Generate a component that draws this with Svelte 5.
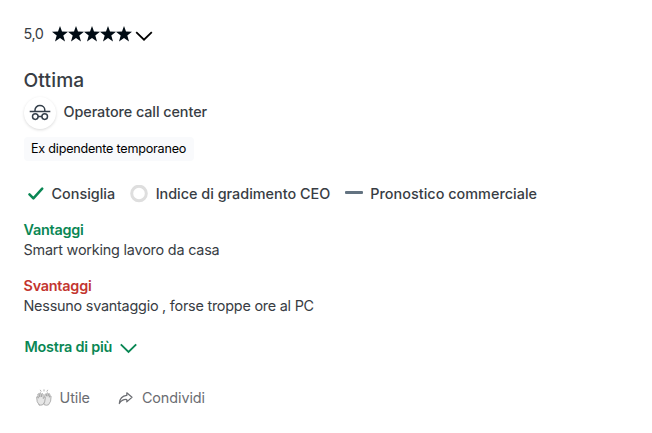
<script>
  const stars = [0, 16, 32, 48, 64];
  const sections = [
    { kind: 'pros', title: 'Vantaggi', text: 'Smart working lavoro da casa' },
    { kind: 'cons', title: 'Svantaggi', text: 'Nessuno svantaggio , forse troppe ore al PC' }
  ];
</script>

<article class="review">
  <header class="rating">
    <span class="score">5,0</span>
    <svg class="stars" width="80" height="16" viewBox="0 0 80 16" fill="#000b14">
      {#each stars as x}
        <path transform="translate({x} 0)" d="M8 0 10 5.6 16 5.8 11.3 9.4 13 15.4 8 11.9 3 15.4 4.7 9.4 0 5.8 6 5.6Z" />
      {/each}
    </svg>
    <svg class="caret" width="18" height="12" viewBox="0 0 18 12" fill="none" stroke="#000" stroke-width="1.8"><path d="M1.2 2.2 9 9.7 16.8 2.2" /></svg>
  </header>

  <h2>Ottima</h2>

  <div class="author">
    <span class="avatar">
      <svg width="22" height="18" viewBox="0 0 22 18" fill="none" stroke="#343f4a" stroke-width="1.5">
        <path d="M.7 7.4h20.6M6 7.2V6a4.9 4.4 0 0 1 9.8 0v1.2M9 12.4h4" />
        <circle cx="6.3" cy="12.6" r="2.8" /><circle cx="15.7" cy="12.6" r="2.8" />
      </svg>
    </span>
    <span class="job">Operatore call center</span>
  </div>

  <span class="chip">Ex dipendente temporaneo</span>

  <div class="opinions">
    <span class="opinion"><svg class="check" width="16" height="14" viewBox="0 0 16 14" fill="none" stroke="#0a8754" stroke-width="2.5" stroke-linecap="round" stroke-linejoin="round"><path d="M1.5 7.4 5.4 11.4 14.2 1.6" /></svg>Consiglia</span>
    <span class="opinion ceo"><svg width="18" height="18" viewBox="0 0 18 18"><circle cx="9" cy="8.5" r="7.3" fill="none" stroke="#dedede" stroke-width="3" /></svg>Indice di gradimento CEO</span>
    <span class="opinion outlook"><svg width="18" height="18" viewBox="0 0 18 18"><rect x="0" y="6" width="18" height="3" rx="1" fill="#637381" /></svg>Pronostico commerciale</span>
  </div>

  {#each sections as s}
    <section class={s.kind}>
      <h3>{s.title}</h3>
      <p>{s.text}</p>
    </section>
  {/each}

  <div class="more">
    <span>Mostra di più</span>
    <svg width="17" height="11" viewBox="0 0 17 11" fill="none" stroke="#0a8754" stroke-width="1.9"><path d="M.8 1.4 8.5 9 16.2 1.4" /></svg>
  </div>

  <footer>
    <span class="action">
      <svg width="18" height="18" viewBox="0 0 18 18" fill="#e6e6e6" stroke="#a0a0a0" stroke-width=".8" stroke-linecap="round" stroke-linejoin="round">
        <path d="M9.6 8.4 10 5.2q.7-.7 1.1.2l.3 1.8.5-3.1q.8-.7 1.2.2l-.1 3 .8-2.5q.9-.4 1 .5l-.4 3 .8-1.4q.9-.3.9.6l-.5 4.7-2.1 3.6q-2 1-4.2 0Z" />
        <path d="M4.2 15.9 2.2 12.7 1.6 8q.3-.9 1-.3l.8 1.5-.6-4q.5-.9 1.2-.1l.9 3-.2-4q.7-.8 1.2 0l.6 3.7.4-2.9q.8-.7 1.2.2l.2 4.5 1-1.6q1-.5 1.1.5l-.7 4.3-1.9 2.9q-2 .9-3.6.2Z" />
        <path d="M6 2.3 5.4 1.2M9 2V.8M12 2.3l.6-1.1" />
      </svg>Utile
    </span>
    <span class="action share">
      <svg width="16" height="16" viewBox="0 0 16 16" fill="none" stroke="#6b6d72" stroke-width="1.2" stroke-linejoin="round"><path d="M8.8 2.8 14 7.3 8.8 11.9V9.5C5.2 9.2 3.2 10.6 1.3 13.5 1.7 8.8 4.2 5.8 8.8 5.4Z" /></svg>Condividi
    </span>
  </footer>
</article>

<style>
  :global(body) { background: #fff; }
  .review { box-sizing: border-box; width: 652px; height: 433px; padding: 24px 24px 0 23.5px; display: flex; flex-direction: column; align-items: flex-start; font-family: Inter, 'Liberation Sans', sans-serif; font-size: 14.4px; line-height: 20px; color: #383d44; white-space: nowrap; }
  svg { display: block; flex: none; }
  .rating { display: flex; align-items: center; height: 20px; }
  .score { width: 28.5px; letter-spacing: -.4px; }
  .caret { margin: 4px 0 0 3px; }
  h2 { margin: 22px 0 0; font-size: 19.2px; line-height: 28px; font-weight: 500; letter-spacing: .15px; }
  .author { display: flex; align-items: center; gap: 8px; height: 32px; margin-top: 3px; }
  .avatar { display: flex; align-items: center; justify-content: center; width: 32px; height: 32px; border-radius: 50%; box-shadow: 0 1px 3px #00000026; }
  .job { font-weight: 500; margin-top: -2px; letter-spacing: -.07px; }
  .chip { box-sizing: border-box; width: 170px; height: 24px; margin-top: 8px; padding-left: 7.5px; border-radius: 4px; background: #f9fafc; color: #000; font-size: 12.6px; line-height: 24px; letter-spacing: -.22px; }
  .opinions { display: flex; height: 20px; margin-top: 23px; font-weight: 500; }
  .opinion { display: flex; align-items: center; gap: 8px; }
  .check { margin-left: 4px; }
  .ceo { margin-left: 14.5px; }
  .outlook { margin-left: 15px; gap: 7px; letter-spacing: .03px; }
  section { display: flex; flex-direction: column; }
  .pros { margin-top: 16px; }
  .cons { margin-top: 16px; }
  h3, p { margin: 0; font-size: 14.4px; line-height: 20px; }
  h3 { font-weight: 600; letter-spacing: -.22px; }
  p { letter-spacing: -.2px; }
  .cons p { letter-spacing: -.23px; }
  .pros h3, .more { color: #0a8754; }
  .cons h3 { color: #c3352f; }
  .more { display: flex; align-items: center; gap: 8px; height: 20px; margin: 21px 0 0 1px; font-weight: 600; letter-spacing: -.22px; }
  .more svg { margin-top: 3px; }
  footer { display: flex; margin: 31px 0 0 11px; height: 20px; color: #6b6d72; }
  .action { display: flex; align-items: center; gap: 7px; letter-spacing: -.08px; }
  .share { margin-left: 28px; gap: 8px; }
</style>
